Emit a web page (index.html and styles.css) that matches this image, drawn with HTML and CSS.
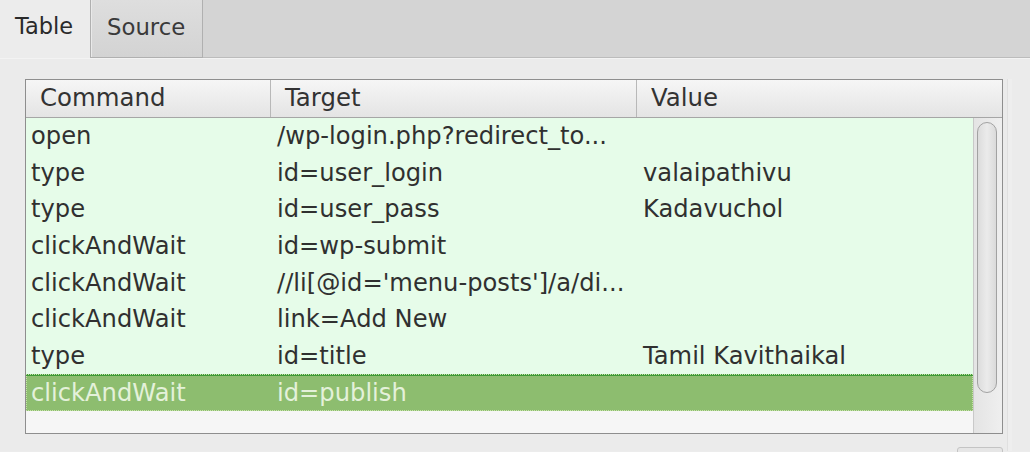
FILE: index.html
```html
<!DOCTYPE html>
<html>
<head>
<meta charset="utf-8">
<link rel="stylesheet" href="styles.css">
</head>
<body>
<div class="tabs">
  <div class="tab active">Table</div>
  <div class="tab">Source</div>
  <div class="tab-fill"></div>
</div>
<div class="panel">
  <div class="grid">
    <div class="head">
      <div class="hcell c1">Command</div>
      <div class="hcell c2">Target</div>
      <div class="hcell c3">Value</div>
    </div>
    <div class="body">
      <div class="rows">
        <div class="row"><div class="cell c1">open</div><div class="cell c2">/wp-login.php?redirect_to...</div><div class="cell c3"></div></div>
        <div class="row"><div class="cell c1">type</div><div class="cell c2">id=user_login</div><div class="cell c3">valaipathivu</div></div>
        <div class="row"><div class="cell c1">type</div><div class="cell c2">id=user_pass</div><div class="cell c3">Kadavuchol</div></div>
        <div class="row"><div class="cell c1">clickAndWait</div><div class="cell c2">id=wp-submit</div><div class="cell c3"></div></div>
        <div class="row"><div class="cell c1">clickAndWait</div><div class="cell c2">//li[@id='menu-posts']/a/di...</div><div class="cell c3"></div></div>
        <div class="row"><div class="cell c1">clickAndWait</div><div class="cell c2">link=Add New</div><div class="cell c3"></div></div>
        <div class="row"><div class="cell c1">type</div><div class="cell c2">id=title</div><div class="cell c3">Tamil Kavithaikal</div></div>
        <div class="row selected"><div class="cell c1">clickAndWait</div><div class="cell c2">id=publish</div><div class="cell c3"></div></div>
        <div class="empty"></div>
      </div>
      <div class="scroll"><div class="thumb"></div></div>
    </div>
  </div>
  <div class="side"></div>
</div>
<div class="btn-peek"></div>
</body>
</html>
```

FILE: styles.css
```css
html, body {
  margin: 0;
  padding: 0;
}
body {
  width: 1030px;
  height: 452px;
  overflow: hidden;
  background: #ececec;
  font-family: "DejaVu Sans", "Liberation Sans", sans-serif;
  color: #2e2e2e;
  position: relative;
}
.tabs {
  display: flex;
  height: 58px;
}
.tab {
  box-sizing: border-box;
  height: 58px;
}
.tab.active {
  width: 90px;
  background: #ececec;
  padding: 13px 0 0 15px;
  font-size: 22.5px;
  color: #2a2a2a;
}
.tab:not(.active) {
  width: 113px;
  background: linear-gradient(#dedede, #d3d3d3);
  border: 1px solid #b0b0b0;
  border-top: none;
  box-shadow: inset 1px 0 0 #e9e9e9;
  padding: 14px 0 0 16px;
  font-size: 22.8px;
  color: #3a3a3a;
}
.tab-fill {
  flex: 1;
  background: #d4d4d4;
  border-bottom: 1px solid #bcbcbc;
}
.panel {
  display: flex;
  padding: 20px 0 0 25px;
  border-top: 1px solid #f3f3f3;
  background: #ebebeb;
  height: 393px;
  box-sizing: border-box;
}
.grid {
  width: 978px;
  height: 355px;
  box-sizing: border-box;
  border: 1px solid #8e8e8e;
  background: #f6f6f6;
  display: flex;
  flex-direction: column;
}
.head {
  display: flex;
  height: 38px;
  box-sizing: border-box;
  border-bottom: 1px solid #a6a6a6;
  background: linear-gradient(#f6f6f6, #e4e4e4);
}
.hcell {
  font-size: 24.4px;
  color: #333;
  padding: 3px 0 0 14px;
  box-sizing: border-box;
  white-space: nowrap;
}
.head .c1 { width: 245px; border-right: 1px solid #b8b8b8; }
.head .c2 { width: 366px; border-right: 1px solid #b8b8b8; }
.head .c3 { flex: 1; }
.body {
  flex: 1;
  display: flex;
}
.rows {
  width: 947px;
  display: flex;
  flex-direction: column;
}
.row {
  display: flex;
  height: 36.6px;
  background: #e6fce9;
  align-items: center;
}
.cell {
  font-size: 24.2px;
  white-space: nowrap;
  color: #303030;
  padding-left: 5px;
  box-sizing: border-box;
}
.row .c1 { width: 245px; }
.row .c2 { width: 366px; padding-left: 6px; }
.row .c3 { flex: 1; padding-left: 6px; }
.row.selected {
  background: #8dbd6f;
  border-top: 2px solid #3f9a37;
  outline: 1px dotted #c6e2a8;
  outline-offset: -1px;
  box-sizing: border-box;
}
.row.selected .cell {
  color: #e4f1da;
}
.empty {
  flex: 1;
  background: #f6f6f6;
}
.scroll {
  flex: 1;
  border-left: 1px solid #c9c9c9;
  background: linear-gradient(90deg, #e4e4e4, #efefef);
  padding: 4px 0 0 3px;
}
.thumb {
  width: 20px;
  height: 271px;
  box-sizing: border-box;
  border: 1px solid #a2a2a2;
  border-radius: 11px;
  background: linear-gradient(90deg, #dcdcdc, #ebebeb 50%, #dadada);
}
.side {
  width: 4px;
  margin-left: 4px;
  height: 100%;
  border-left: 1px solid #e0e0e0;
  background: #eeeeee;
}
.btn-peek {
  position: absolute;
  left: 957px;
  top: 447px;
  width: 44px;
  height: 10px;
  border: 1px solid #c4c4c4;
  border-radius: 3px;
  background: #e6e6e6;
}
```
